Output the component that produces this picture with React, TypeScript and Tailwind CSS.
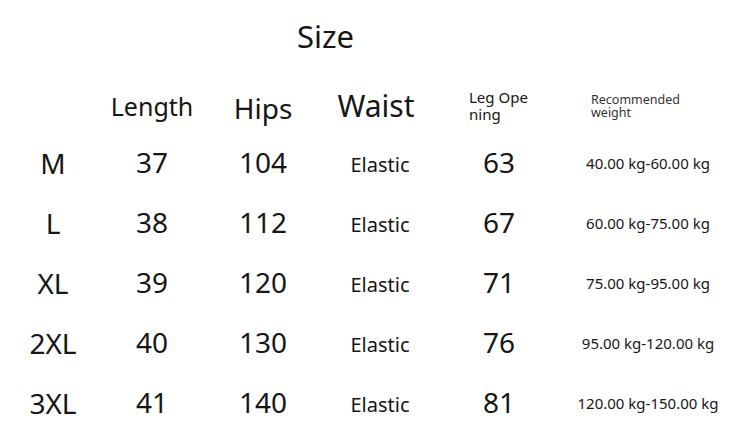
const rows = [
  { size: "M", length: "37", hips: "104", waist: "Elastic", leg: "63", weight: "40.00 kg-60.00 kg" },
  { size: "L", length: "38", hips: "112", waist: "Elastic", leg: "67", weight: "60.00 kg-75.00 kg" },
  { size: "XL", length: "39", hips: "120", waist: "Elastic", leg: "71", weight: "75.00 kg-95.00 kg" },
  { size: "2XL", length: "40", hips: "130", waist: "Elastic", leg: "76", weight: "95.00 kg-120.00 kg" },
  { size: "3XL", length: "41", hips: "140", waist: "Elastic", leg: "81", weight: "120.00 kg-150.00 kg" },
];

const cols = "grid grid-cols-[106px_92px_130px_104px_134px_164px]";

export default function App() {
  return (
    <div className="w-[750px] h-[442px] bg-white text-[#161616] font-['Noto_Sans',sans-serif] overflow-hidden">
      {/* Title */}
      <div className="pt-4 pl-[297px]">
        <h1 className="text-[31px] leading-10 font-normal">Size</h1>
      </div>

      {/* Header row */}
      <div className={`${cols} h-[52px] mt-6 items-center`}>
        <div />
        <div className="text-center text-[25px] leading-none">Length</div>
        <div className="text-center text-[28px] leading-none pt-1">Hips</div>
        <div className="text-center text-[30px] leading-none pr-2">Waist</div>
        <div className="pl-[37px] text-[15px] leading-[17px]">
          <div>Leg Ope</div>
          <div>ning</div>
        </div>
        <div className="pl-[25px] text-[12.5px] leading-[13px] text-[#333]">
          <div>Recommended</div>
          <div>weight</div>
        </div>
      </div>

      {/* Data rows */}
      {rows.map((r) => (
        <div key={r.size} className={`${cols} h-[60px] items-center`}>
          <div className="text-center text-[28px] leading-none pt-0.5">{r.size}</div>
          <div className="text-center text-[28px] leading-none">{r.length}</div>
          <div className="text-center text-[28px] leading-none">{r.hips}</div>
          <div className="text-center text-[20px] leading-none pt-1.5">{r.waist}</div>
          <div className="text-center text-[28px] leading-none">{r.leg}</div>
          <div className="text-center text-[15px] leading-none pt-0.5">{r.weight}</div>
        </div>
      ))}
    </div>
  );
}
